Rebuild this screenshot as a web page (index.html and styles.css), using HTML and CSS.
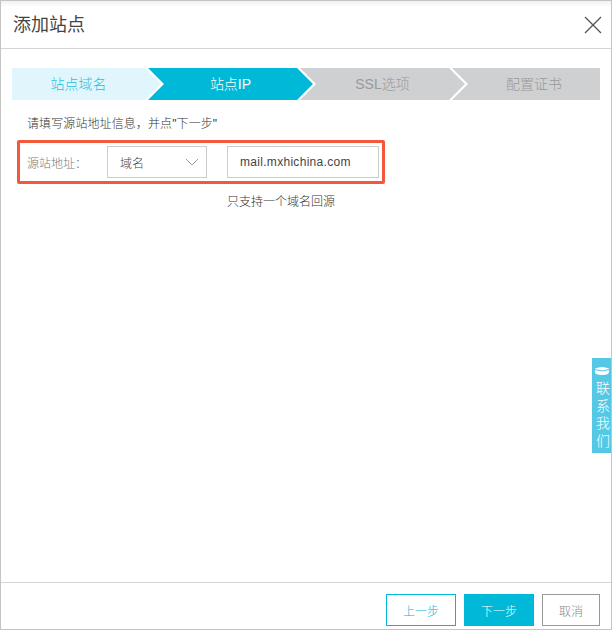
FILE: index.html
```html
<!DOCTYPE html>
<html lang="zh">
<head>
<meta charset="utf-8">
<title>添加站点</title>
<link rel="stylesheet" href="styles.css">
</head>
<body>
<div class="dialog">
  <header class="head">
    <h1 class="title">添加站点</h1>
    <svg class="close" width="18" height="18" viewBox="0 0 18 18"><path d="M1 1L17 17M17 1L1 17" stroke="#555" stroke-width="1.3" fill="none"/></svg>
  </header>
  <main class="body">
    <ol class="steps">
      <li class="step first done">站点域名</li>
      <li class="step mid active">站点IP</li>
      <li class="step mid todo">SSL选项</li>
      <li class="step last todo">配置证书</li>
    </ol>
    <p class="hint">请填写源站地址信息，并点"下一步"</p>
    <div class="outline">
      <span class="label">源站地址：</span>
      <div class="select">
        <span>域名</span>
        <svg width="14" height="8" viewBox="0 0 14 8"><path d="M1 1L7 7L13 1" stroke="#999" fill="none"/></svg>
      </div>
      <div class="input">mail.mxhichina.com</div>
    </div>
    <p class="help">只支持一个域名回源</p>
  </main>
  <footer class="foot">
    <button class="btn prev">上一步</button>
    <button class="btn next">下一步</button>
    <button class="btn cancel">取消</button>
  </footer>
  <aside class="contact">
    <svg width="16" height="10" viewBox="0 0 16 10"><path d="M1 2.5Q8 -0.5 15 2.5V6Q15 9 8 9Q1 9 1 6Z" fill="#fff"/><path d="M1 3.5Q8 6.5 15 3.5" stroke="#55c8e6" fill="none"/></svg>
    <span>联</span><span>系</span><span>我</span><span>们</span>
  </aside>
</div>
</body>
</html>
```
FILE: styles.css
```css
* { box-sizing: border-box; }
html, body { margin: 0; padding: 0; }
body { width: 612px; height: 630px; background: #fff; font-family: "Liberation Sans", "Noto Sans CJK SC", sans-serif; font-weight: 300; overflow: hidden; }
.dialog { position: relative; width: 612px; height: 630px; border: 1px solid #c4c4c4; display: flex; flex-direction: column; background: #fff; }
.head { height: 48px; flex: none; display: flex; align-items: center; justify-content: space-between; padding: 0 9px 0 12px; border-bottom: 1px solid #d5d5d5; background: linear-gradient(#f1f1f1, #fff 6px); }
.title { margin: 0; font-size: 18px; font-weight: 400; color: #444; line-height: 48px; }
.close { display: block; margin-top: 1px; }
.body { flex: 1; padding: 19px 10px 0 11px; }
.steps { display: flex; list-style: none; margin: 0; padding: 0; height: 32px; }
.step { height: 32px; line-height: 32px; font-size: 14px; text-align: center; margin-right: -13px; }
.first { width: 149px; padding-right: 16px; clip-path: polygon(0 0, 133px 0, 100% 50%, 133px 100%, 0 100%); }
.mid { width: 165px; clip-path: polygon(0 0, 149px 0, 100% 50%, 149px 100%, 0 100%, 16px 50%); }
.last { width: 148px; margin-right: 0; padding-left: 16px; clip-path: polygon(0 0, 100% 0, 100% 100%, 0 100%, 16px 50%); }
.done { background: #e1f6fc; color: #27bfdf; }
.active { background: #00b9d9; color: #fff; }
.todo { background: #cfd0d2; color: #98999b; }
.hint { margin: 16px 0 0 15px; font-size: 12px; line-height: 17px; color: #333; letter-spacing: 0.1px; }
.outline { display: flex; align-items: center; width: 368px; height: 44px; margin: 7px 0 0 5px; padding-left: 7px; border: 3px solid #f1593a; border-radius: 2px; }
.label { width: 80px; flex: none; font-size: 12px; color: #777; }
.select { width: 100px; height: 32px; flex: none; display: flex; align-items: center; justify-content: space-between; padding: 0 7px 0 12px; border: 1px solid #ccc; font-size: 12px; color: #444; }
.input { width: 152px; height: 32px; flex: none; margin-left: 20px; padding-left: 12px; border: 1px solid #ccc; font-size: 12px; line-height: 30px; color: #444; letter-spacing: 0.3px; }
.help { margin: 10px 0 0 215px; font-size: 12px; line-height: 17px; color: #333; }
.foot { height: 47px; flex: none; display: flex; justify-content: flex-end; gap: 8px; padding: 11px 11px 0 0; border-top: 1px solid #d5d5d5; }
.btn { height: 32px; padding: 0; font-family: inherit; font-size: 12px; font-weight: 300; background: #fff; }
.prev { width: 70px; border: 1px solid #00b9d9; color: #00b9d9; }
.next { width: 70px; border: 1px solid #00b9d9; background: #00b9d9; color: #fff; }
.cancel { width: 58px; border: 1px solid #999; color: #888; }
.contact { position: absolute; top: 357px; right: -1px; width: 20px; height: 95px; display: flex; flex-direction: column; align-items: center; padding: 8px 0 0 3px; background: #55c8e6; color: #fff; font-size: 14px; line-height: 17.5px; border-right: 1px solid #c4c4c4; }
.contact svg { flex: none; margin: 0 3px 4px 0; }
```
